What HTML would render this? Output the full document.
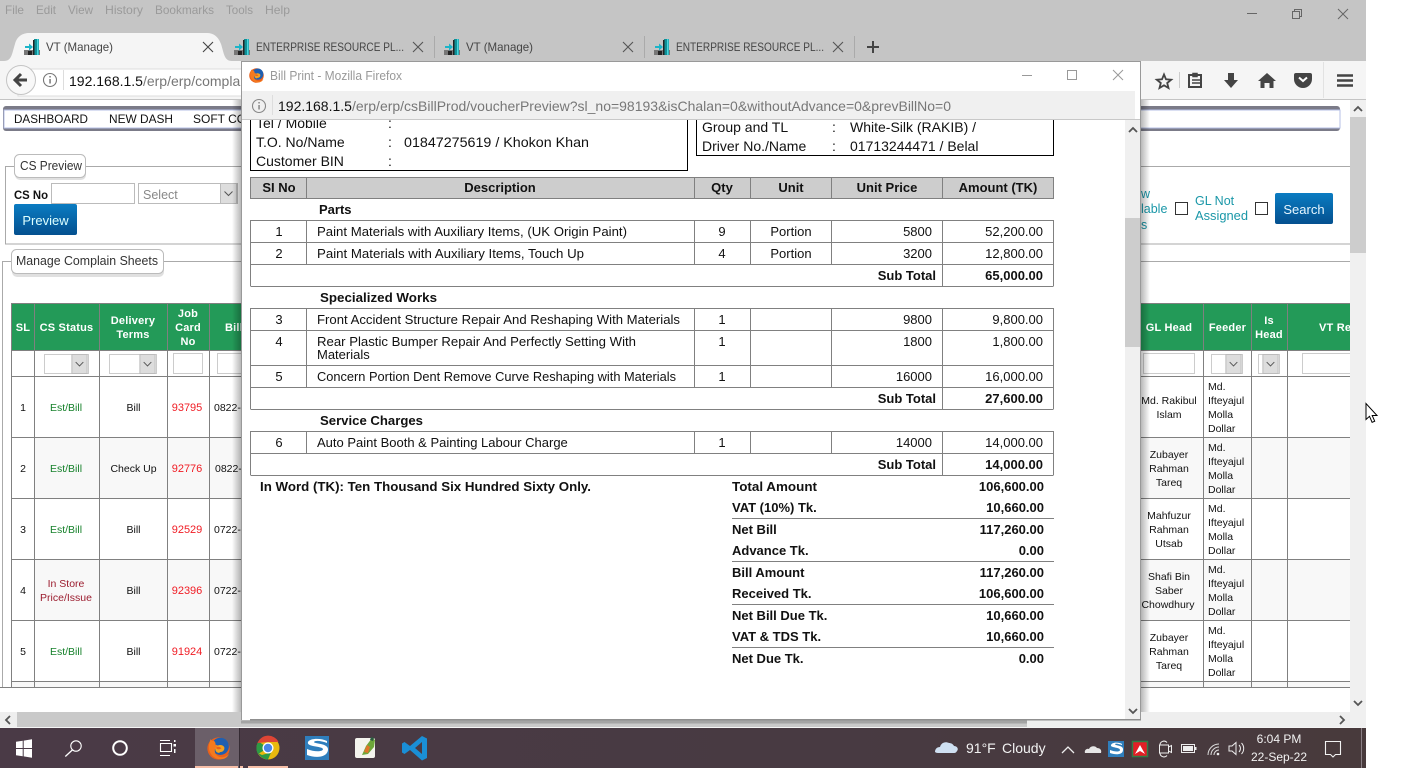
<!DOCTYPE html>
<html><head><meta charset="utf-8"><title>Bill Print</title>
<style>
html,body{margin:0;padding:0;background:#fff;width:1408px;height:768px;overflow:hidden}
svg{display:block;font-family:"Liberation Sans",Arial,sans-serif}
.h{font-weight:bold;fill:#fff;font-size:11px;text-anchor:middle;letter-spacing:.2px}
.c{font-size:10.5px;fill:#111;text-anchor:middle}
.l{font-size:10.5px;fill:#111}
.g{fill:#16812b;font-size:10.5px;text-anchor:middle}
.r{fill:#f01c24;font-size:11px;text-anchor:middle}
.b{font-size:13px;fill:#111}
.bc{font-size:13px;fill:#111;text-anchor:middle}
.br{font-size:13px;fill:#111;text-anchor:end}
.bb{font-size:13px;fill:#111;font-weight:bold}
.bbc{font-size:13px;fill:#111;font-weight:bold;text-anchor:middle}
.bbr{font-size:13px;fill:#111;font-weight:bold;text-anchor:end}
.i{font-size:14px;fill:#111}
.m{font-size:12px;fill:#9a9a9a}
.tab{font-size:12px;fill:#454545}
</style></head>
<body>
<svg width="1408" height="768" viewBox="0 0 1408 768" xmlns="http://www.w3.org/2000/svg">
<defs>
<linearGradient id="btn" x1="0" y1="0" x2="0" y2="1"><stop offset="0" stop-color="#0a7cc2"/><stop offset="1" stop-color="#04508f"/></linearGradient>
<linearGradient id="sh" x1="0" y1="0" x2="1" y2="0"><stop offset="0" stop-color="#000" stop-opacity="0"/><stop offset="1" stop-color="#000" stop-opacity=".28"/></linearGradient>
<linearGradient id="sh2" x1="0" y1="0" x2="1" y2="0"><stop offset="0" stop-color="#000" stop-opacity=".28"/><stop offset="1" stop-color="#000" stop-opacity="0"/></linearGradient>
<linearGradient id="tb" x1="0" y1="0" x2="1" y2="0"><stop offset="0" stop-color="#4a3a46"/><stop offset=".6" stop-color="#483a42"/><stop offset="1" stop-color="#483a3c"/></linearGradient>
<symbol id="fav" viewBox="0 0 16 16"><rect x="0" y="11" width="16" height="5" fill="#777"/><rect x="10" y="0" width="5" height="16" fill="#0f8f96"/><rect x="9" y="1" width="1.500" height="15" fill="#222"/><rect x="13" y="0" width="1.500" height="16" fill="#47d6de"/><path d="M1 7h4V4.500l4 3.500-4 3.500V9H1z" fill="#1cb5c9"/><rect x="4" y="12" width="4" height="4" fill="#222"/></symbol>
<symbol id="ff" viewBox="0 0 32 32"><circle cx="16" cy="16" r="15.500" fill="#e8601c"/><circle cx="18.500" cy="13" r="12" fill="#1f5fb0"/><path d="M5 3C3 8 2 13 3 18c2 8 9 13 16 13 6 0 10-3 12-8-2 3-7 6-12 5-6-1-9-6-8-11 1-2 3-3 5-3 0-2-2-3-4-3 0-3-1-5-3-6-1 1-3 0-4-2z" fill="#f47a1e"/><path d="M14 13c3-3 8-2 10 1 1 4-2 7-6 7-1 2-5 1-6-2-1-2 0-5 2-6z" fill="#f3a21f"/><path d="M13 14c3-1 6 0 7 2-2 1-5 2-7 0z" fill="#e8601c"/></symbol>
<symbol id="sel" viewBox="0 0 17 21"><rect x=".5" y=".5" width="16" height="20" fill="#ddd" stroke="#bbb"/><path d="M4.500 8.500l4 4 4-4" fill="none" stroke="#555" stroke-width="1"/></symbol>
<clipPath id="main"><rect x="0" y="99" width="1350" height="613"/></clipPath>
</defs>

<!-- window chrome -->
<rect x="0" y="0" width="1366" height="61" fill="#c5c5c5"/>
<rect x="0" y="61" width="1366" height="38" fill="#f5f5f5"/>
<rect x="0" y="99" width="1366" height="1" fill="#c4c4c4"/>
<rect x="0" y="100" width="1366" height="628" fill="#fff"/>
<text x="5" y="14" class="m" textLength="19" lengthAdjust="spacingAndGlyphs">File</text><text x="36" y="14" class="m" textLength="20" lengthAdjust="spacingAndGlyphs">Edit</text><text x="68" y="14" class="m" textLength="25" lengthAdjust="spacingAndGlyphs">View</text><text x="105" y="14" class="m" textLength="38" lengthAdjust="spacingAndGlyphs">History</text><text x="155" y="14" class="m" textLength="59" lengthAdjust="spacingAndGlyphs">Bookmarks</text><text x="226" y="14" class="m" textLength="27" lengthAdjust="spacingAndGlyphs">Tools</text><text x="265" y="14" class="m" textLength="25" lengthAdjust="spacingAndGlyphs">Help</text>
<path d="M0 61h4c8 0 8-8 11-17 2-8 8-11 14-11h178c6 0 11 3 14 11 3 9 3 17 11 17z" fill="#f5f5f5"/>
<use href="#fav" x="24" y="39" width="16" height="16"/>
<text x="46" y="51" class="tab" textLength="67" lengthAdjust="spacingAndGlyphs">VT (Manage)</text>
<path d="M203 42l10 10M213 42l-10 10" stroke="#444" stroke-width="1.100"/>
<use href="#fav" x="234" y="39" width="16" height="16"/>
<text x="256" y="51" class="tab" textLength="148" lengthAdjust="spacingAndGlyphs">ENTERPRISE RESOURCE PL...</text>
<path d="M413 42l10 10M423 42l-10 10" stroke="#555" stroke-width="1.100"/>
<rect x="434" y="36" width="1" height="22" fill="#aaa"/>
<use href="#fav" x="444" y="39" width="16" height="16"/>
<text x="466" y="51" class="tab" textLength="67" lengthAdjust="spacingAndGlyphs">VT (Manage)</text>
<path d="M623 42l10 10M633 42l-10 10" stroke="#555" stroke-width="1.100"/>
<rect x="644" y="36" width="1" height="22" fill="#aaa"/>
<use href="#fav" x="654" y="39" width="16" height="16"/>
<text x="676" y="51" class="tab" textLength="148" lengthAdjust="spacingAndGlyphs">ENTERPRISE RESOURCE PL...</text>
<path d="M833 42l10 10M843 42l-10 10" stroke="#555" stroke-width="1.100"/>
<rect x="854" y="36" width="1" height="22" fill="#aaa"/>
<path d="M873 41v12M867 47h12" stroke="#444" stroke-width="2"/>
<path d="M1247 13.500h10" stroke="#666" stroke-width="1"/>
<path d="M1292.500 11.500h7v7h-7zM1294.500 11.500v-2h7v7h-2" fill="none" stroke="#666"/>
<path d="M1338 9l10 10M1348 9l-10 10" stroke="#666" stroke-width="1"/>

<!-- nav bar -->
<rect x="18" y="69" width="1122" height="27" fill="#fff" stroke="#ddd"/>
<circle cx="21" cy="80" r="14.500" fill="#f8f8f8" stroke="#c4c4c4"/>
<path d="M27 80H16M21 74l-6 6 6 6" fill="none" stroke="#444" stroke-width="3"/>
<circle cx="50" cy="80" r="6.500" fill="none" stroke="#777" stroke-width="1.100"/><rect x="49.300" y="79" width="1.500" height="4.500" fill="#777"/><rect x="49.300" y="76" width="1.500" height="1.500" fill="#777"/>
<rect x="63" y="70" width="1" height="20" fill="#ddd"/>
<text x="69" y="86" style="font-size:14px" fill="#111">192.168.1.5<tspan fill="#777">/erp/erp/complain</tspan></text>
<path d="M1164 74.500l2 4.800 5.200.4-4 3.300 1.300 5-4.500-2.700-4.500 2.700 1.300-5-4-3.300 5.200-.4z" fill="none" stroke="#444" stroke-width="1.800"/>
<rect x="1179" y="72" width="1" height="16" fill="#ccc"/>
<path d="M1189 75h12v12h-12z" fill="none" stroke="#444" stroke-width="2"/><path d="M1193 73.500h4v3h-4zM1192 80h8M1192 83h8" fill="none" stroke="#444" stroke-width="1.500"/>
<path d="M1228 73h6v7h4l-7 8-7-8h4z" fill="#444"/>
<path d="M1267 73l9 8h-2.500v7h-4v-5h-5v5h-4v-7H1258z" fill="#444"/>
<path d="M1296 73h14a2 2 0 0 1 2 2v4a9 9 0 0 1-18 0v-4a2 2 0 0 1 2-2z" fill="#444"/><path d="M1299 77.500l4 3.500 4-3.500" fill="none" stroke="#fff" stroke-width="2"/>
<path d="M1337 75.500h16M1337 80.500h16M1337 85.500h16" stroke="#444" stroke-width="2.600"/>
<rect x="1323" y="62" width="1" height="36" fill="#e2e2e2"/>

<!-- page -->
<g clip-path="url(#main)">
<rect x="3" y="106" width="1337" height="25" rx="3" fill="#7b7b88"/>
<rect x="4" y="110" width="1336" height="18" fill="#fff" stroke="#b4bfe6"/>
<text x="14" y="123" style="font-size:12px" fill="#111" textLength="74" lengthAdjust="spacingAndGlyphs">DASHBOARD</text><text x="109" y="123" style="font-size:12px" fill="#111" textLength="64" lengthAdjust="spacingAndGlyphs">NEW DASH</text><text x="193" y="123" style="font-size:12px" fill="#111">SOFT CO</text>

<path d="M14 166.500H5.500v77.500H1350M86 166.500H1350" fill="none" stroke="#aaa"/>
<path d="M11 261.500H2.500V687M163 261.500H1350" fill="none" stroke="#aaa"/>
<rect x="15" y="156" width="71" height="24" rx="5" fill="#000" opacity=".12"/>
<rect x="14.500" y="154.500" width="71" height="23" rx="5" fill="#fff" stroke="#bbb"/>
<text x="20" y="170" style="font-size:12.500px" fill="#333" textLength="62" lengthAdjust="spacingAndGlyphs">CS Preview</text>
<text x="14" y="199" style="font-size:12px;font-weight:bold" fill="#111" textLength="34" lengthAdjust="spacingAndGlyphs">CS No</text>
<rect x="51.500" y="183.500" width="83" height="20" fill="#fff" stroke="#bbb"/>
<rect x="138.500" y="183.500" width="99" height="20" fill="#fff" stroke="#bbb"/>
<text x="143" y="199" style="font-size:12.500px" fill="#888">Select</text>
<use href="#sel" x="220" y="183" width="17" height="21"/>
<rect x="14" y="204" width="63" height="31" rx="2" fill="url(#btn)"/>
<text x="45.500" y="225" style="font-size:13px;text-anchor:middle" fill="#dff">Preview</text>
<rect x="12" y="251" width="152" height="26" rx="5" fill="#000" opacity=".12"/>
<rect x="11.500" y="249.500" width="152" height="24" rx="5" fill="#fff" stroke="#bbb"/>
<text x="16" y="265" style="font-size:12.500px" fill="#333" textLength="142" lengthAdjust="spacingAndGlyphs">Manage Complain Sheets</text>

<!-- right filter -->
<g style="font-size:12.500px" fill="#1a97a8"><text x="1141" y="198">w</text><text x="1141" y="213">lable</text><text x="1141" y="229">s</text><text x="1195" y="205">GL Not</text><text x="1195" y="220" textLength="53" lengthAdjust="spacingAndGlyphs">Assigned</text></g>
<rect x="1175.500" y="202.500" width="12" height="12" fill="#fff" stroke="#333"/>
<rect x="1255.500" y="202.500" width="12" height="12" fill="#fff" stroke="#333"/>
<rect x="1275" y="193" width="58" height="31" rx="2" fill="url(#btn)"/>
<text x="1304" y="214" style="font-size:13px;text-anchor:middle" fill="#e6f6ff">Search</text>

<!-- complain table -->
<rect x="11" y="303" width="1339" height="47" fill="#239a58"/>
<rect x="35" y="438" width="1315" height="60" fill="#f8f8f8"/>
<rect x="35" y="560" width="1315" height="60" fill="#f8f8f8"/>
<rect x="11" y="682" width="1339" height="5" fill="#f8f8f8"/>
<path d="M11.500 303V687M34.500 303V687M99.500 303V687M167.500 303V687M209.500 303V687M1140.500 303V687M1203.500 303V687M1251.500 303V687M1287.500 303V687" stroke="#808080" fill="none"/>
<path d="M11 303.500H1350M11 350.500H1350M11 376.500H1350M11 437.500H1350M11 498.500H1350M11 559.500H1350M11 620.500H1350M11 681.500H1350M0 687.500H1350" stroke="#808080" fill="none"/>
<text x="23" y="331" class="h">SL</text><text x="66.500" y="331" class="h">CS Status</text>
<text x="133" y="324" class="h">Delivery</text><text x="133" y="338" class="h">Terms</text>
<text x="188" y="317" class="h">Job</text><text x="188" y="331" class="h">Card</text><text x="188" y="345" class="h">No</text>
<text x="225" y="331" class="h" style="text-anchor:start">Bill</text>
<text x="1169" y="331" class="h">GL Head</text><text x="1227.500" y="331" class="h">Feeder</text>
<text x="1269" y="324" class="h">Is</text><text x="1269" y="338" class="h">Head</text>
<text x="1319" y="331" class="h" style="text-anchor:start">VT Re</text>
<!-- filters -->
<g fill="#fff" stroke="#ccc"><rect x="44.500" y="354.500" width="44" height="19"/><rect x="109.500" y="354.500" width="47" height="19"/><rect x="173.500" y="353.500" width="29" height="20"/><rect x="217.500" y="353.500" width="40" height="20"/><rect x="1143.500" y="353.500" width="51" height="20"/><rect x="1211.500" y="354.500" width="31" height="19"/><rect x="1258.500" y="354.500" width="21" height="19"/><rect x="1302.500" y="353.500" width="60" height="20"/></g>
<use href="#sel" x="71" y="354" width="17" height="20"/><use href="#sel" x="139" y="354" width="17" height="20"/><use href="#sel" x="1225" y="354" width="17" height="20"/><use href="#sel" x="1262" y="354" width="17" height="20"/>
<!-- rows -->
<text x="23" y="411" class="c">1</text><text x="66" y="411" class="g">Est/Bill</text><text x="133.500" y="411" class="c">Bill</text><text x="187" y="411" class="r">93795</text><text x="214" y="411" class="l">0822-</text>
<text x="23" y="472" class="c">2</text><text x="66" y="472" class="g">Est/Bill</text><text x="133.500" y="472" class="c">Check Up</text><text x="187" y="472" class="r">92776</text><text x="215" y="472" class="l">0822-</text>
<text x="23" y="533" class="c">3</text><text x="66" y="533" class="g">Est/Bill</text><text x="133.500" y="533" class="c">Bill</text><text x="187" y="533" class="r">92529</text><text x="214" y="533" class="l">0722-</text>
<text x="23" y="594" class="c">4</text><text x="66" y="587" class="c" style="fill:#9b1c2e">In Store</text><text x="66" y="601" class="c" style="fill:#9b1c2e">Price/Issue</text><text x="133.500" y="594" class="c">Bill</text><text x="187" y="594" class="r">92396</text><text x="214" y="594" class="l">0722-</text>
<text x="23" y="655" class="c">5</text><text x="66" y="655" class="g">Est/Bill</text><text x="133.500" y="655" class="c">Bill</text><text x="187" y="655" class="r">91924</text><text x="214" y="655" class="l">0722-</text>
<text x="1169" y="404" class="c">Md. Rakibul</text><text x="1169" y="418" class="c">Islam</text>
<text x="1169" y="458" class="c">Zubayer</text><text x="1169" y="472" class="c">Rahman</text><text x="1169" y="486" class="c">Tareq</text>
<text x="1169" y="519" class="c">Mahfuzur</text><text x="1169" y="533" class="c">Rahman</text><text x="1169" y="547" class="c">Utsab</text>
<text x="1169" y="580" class="c">Shafi Bin</text><text x="1169" y="594" class="c">Saber</text><text x="1168" y="608" class="c">Chowdhury</text>
<text x="1169" y="641" class="c">Zubayer</text><text x="1169" y="655" class="c">Rahman</text><text x="1169" y="669" class="c">Tareq</text>
<text x="1208" y="390" class="l">Md.</text><text x="1208" y="404" class="l">Ifteyajul</text><text x="1208" y="418" class="l">Molla</text><text x="1208" y="432" class="l">Dollar</text>
<text x="1208" y="451" class="l">Md.</text><text x="1208" y="465" class="l">Ifteyajul</text><text x="1208" y="479" class="l">Molla</text><text x="1208" y="493" class="l">Dollar</text>
<text x="1208" y="512" class="l">Md.</text><text x="1208" y="526" class="l">Ifteyajul</text><text x="1208" y="540" class="l">Molla</text><text x="1208" y="554" class="l">Dollar</text>
<text x="1208" y="573" class="l">Md.</text><text x="1208" y="587" class="l">Ifteyajul</text><text x="1208" y="601" class="l">Molla</text><text x="1208" y="615" class="l">Dollar</text>
<text x="1208" y="634" class="l">Md.</text><text x="1208" y="648" class="l">Ifteyajul</text><text x="1208" y="662" class="l">Molla</text><text x="1208" y="676" class="l">Dollar</text>
</g>

<!-- main scrollbars -->
<rect x="1350" y="100" width="16" height="628" fill="#f0f0f0"/>
<rect x="1350" y="117" width="16" height="136" fill="#cdcdcd"/>
<path d="M1354 111l4-4 4 4" fill="none" stroke="#555" stroke-width="1.800"/>
<path d="M1354 701l4 4 4-4" fill="none" stroke="#555" stroke-width="1.800"/>
<rect x="0" y="712" width="1350" height="16" fill="#eee"/>
<rect x="17" y="712" width="1010" height="16" fill="#c9c9c9"/>
<path d="M10 716l-4 4 4 4" fill="none" stroke="#555" stroke-width="1.800"/>
<path d="M1340 716l4 4-4 4" fill="none" stroke="#555" stroke-width="1.800"/>
<rect x="0" y="727" width="1366" height="1" fill="#f4f4f4"/>

<!-- popup shadow -->
<rect x="232" y="100" width="9" height="612" fill="url(#sh)"/>
<rect x="1141" y="100" width="9" height="612" fill="url(#sh2)"/>
<!-- popup -->
<rect x="241" y="61" width="900" height="659" fill="#fff"/>
<!-- bill content -->
<path d="M250.500 115V170.500H687.500V115" fill="none" stroke="#000" stroke-width="1"/>
<path d="M696.500 115V155.500H1053.500V115" fill="none" stroke="#000" stroke-width="1"/>
<text x="256" y="128" class="i">Tel / Mobile</text><text x="388" y="128" class="i">:</text>
<text x="256" y="147" class="i">T.O. No/Name</text><text x="388" y="147" class="i">:</text><text x="404" y="147" class="i" textLength="185" lengthAdjust="spacingAndGlyphs">01847275619 / Khokon Khan</text>
<text x="256" y="166" class="i">Customer BIN</text><text x="388" y="166" class="i">:</text>
<text x="702" y="132" class="i">Group and TL</text><text x="832" y="132" class="i">:</text><text x="850" y="132" class="i">White-Silk (RAKIB) /</text>
<text x="702" y="151" class="i">Driver No./Name</text><text x="832" y="151" class="i">:</text><text x="850" y="151" class="i">01713244471 / Belal</text>

<rect x="250" y="177" width="804" height="21" fill="#cdcdcd"/>
<g fill="none" stroke="#808080">
<path d="M250.500 177.500H1053.500V198.500H250.500Z"/>
<path d="M306.500 177V198M694.500 177V198M750.500 177V198M831.500 177V198M942.500 177V198"/>
<path d="M250.500 220.500H1053.500M250.500 242.500H1053.500M250.500 264.500H1053.500M250.500 286.500H1053.500M250.500 220V286M1053.500 220V286M306.500 220V264M694.500 220V264M750.500 220V264M831.500 220V264M942.500 220V286"/>
<path d="M250.500 308.500H1053.500M250.500 330.500H1053.500M250.500 365.500H1053.500M250.500 387.500H1053.500M250.500 409.500H1053.500M250.500 308V409M1053.500 308V409M306.500 308V387M694.500 308V387M750.500 308V387M831.500 308V387M942.500 308V409"/>
<path d="M250.500 431.500H1053.500M250.500 453.500H1053.500M250.500 475.500H1053.500M250.500 431V475M1053.500 431V475M306.500 431V453M694.500 431V453M750.500 431V453M831.500 431V453M942.500 431V475"/>
<path d="M732 518.500H1054M732 561.500H1054M732 604.500H1054M732 647.500H1054"/>
</g>
<text x="279" y="192" class="bbc">SI No</text><text x="500" y="192" class="bbc">Description</text><text x="722" y="192" class="bbc">Qty</text><text x="791" y="192" class="bbc">Unit</text><text x="887" y="192" class="bbc">Unit Price</text><text x="998" y="192" class="bbc">Amount (TK)</text>
<text x="319" y="214" class="bb">Parts</text>
<text x="279" y="236" class="bc">1</text><text x="317" y="236" class="b" textLength="310" lengthAdjust="spacingAndGlyphs">Paint Materials with Auxiliary Items, (UK Origin Paint)</text><text x="722" y="236" class="bc">9</text><text x="791" y="236" class="bc">Portion</text><text x="932" y="236" class="br">5800</text><text x="1043" y="236" class="br">52,200.00</text>
<text x="279" y="258" class="bc">2</text><text x="317" y="258" class="b" textLength="267" lengthAdjust="spacingAndGlyphs">Paint Materials with Auxiliary Items, Touch Up</text><text x="722" y="258" class="bc">4</text><text x="791" y="258" class="bc">Portion</text><text x="932" y="258" class="br">3200</text><text x="1043" y="258" class="br">12,800.00</text>
<text x="936" y="280" class="bbr">Sub Total</text><text x="1043" y="280" class="bbr">65,000.00</text>
<text x="320" y="302" class="bb" textLength="117" lengthAdjust="spacingAndGlyphs">Specialized Works</text>
<text x="279" y="324" class="bc">3</text><text x="317" y="324" class="b" textLength="363" lengthAdjust="spacingAndGlyphs">Front Accident Structure Repair And Reshaping With Materials</text><text x="722" y="324" class="bc">1</text><text x="932" y="324" class="br">9800</text><text x="1043" y="324" class="br">9,800.00</text>
<text x="279" y="346" class="bc">4</text><text x="317" y="346" class="b" textLength="319" lengthAdjust="spacingAndGlyphs">Rear Plastic Bumper Repair And Perfectly Setting With</text><text x="317" y="359" class="b">Materials</text><text x="722" y="346" class="bc">1</text><text x="932" y="346" class="br">1800</text><text x="1043" y="346" class="br">1,800.00</text>
<text x="279" y="381" class="bc">5</text><text x="317" y="381" class="b" textLength="359" lengthAdjust="spacingAndGlyphs">Concern Portion Dent Remove Curve Reshaping with Materials</text><text x="722" y="381" class="bc">1</text><text x="932" y="381" class="br">16000</text><text x="1043" y="381" class="br">16,000.00</text>
<text x="936" y="403" class="bbr">Sub Total</text><text x="1043" y="403" class="bbr">27,600.00</text>
<text x="320" y="425" class="bb" textLength="103" lengthAdjust="spacingAndGlyphs">Service Charges</text>
<text x="279" y="447" class="bc">6</text><text x="317" y="447" class="b">Auto Paint Booth &amp; Painting Labour Charge</text><text x="722" y="447" class="bc">1</text><text x="932" y="447" class="br">14000</text><text x="1043" y="447" class="br">14,000.00</text>
<text x="936" y="469" class="bbr">Sub Total</text><text x="1043" y="469" class="bbr">14,000.00</text>
<text x="260" y="491" class="bb" textLength="331" lengthAdjust="spacingAndGlyphs">In Word (TK): Ten Thousand Six Hundred Sixty Only.</text>
<text x="732" y="491" class="bb" textLength="85" lengthAdjust="spacingAndGlyphs">Total Amount</text><text x="1044" y="491" class="bbr">106,600.00</text>
<text x="732" y="512" class="bb">VAT (10%) Tk.</text><text x="1044" y="512" class="bbr">10,660.00</text>
<text x="732" y="534" class="bb">Net Bill</text><text x="1044" y="534" class="bbr">117,260.00</text>
<text x="732" y="555" class="bb">Advance Tk.</text><text x="1044" y="555" class="bbr">0.00</text>
<text x="732" y="577" class="bb">Bill Amount</text><text x="1044" y="577" class="bbr">117,260.00</text>
<text x="732" y="598" class="bb">Received Tk.</text><text x="1044" y="598" class="bbr">106,600.00</text>
<text x="732" y="620" class="bb">Net Bill Due Tk.</text><text x="1044" y="620" class="bbr">10,660.00</text>
<text x="732" y="641" class="bb">VAT &amp; TDS Tk.</text><text x="1044" y="641" class="bbr">10,660.00</text>
<text x="732" y="663" class="bb">Net Due Tk.</text><text x="1044" y="663" class="bbr">0.00</text>

<!-- popup chrome -->
<rect x="241" y="61" width="900" height="59" fill="#fff"/>
<rect x="241" y="91" width="894" height="28" fill="#f0f0f0"/>
<rect x="241" y="119" width="900" height="1" fill="#c8c8c8"/>
<use href="#ff" x="249" y="68" width="15" height="15"/>
<text x="270" y="80" style="font-size:12.500px" fill="#999" textLength="132" lengthAdjust="spacingAndGlyphs">Bill Print - Mozilla Firefox</text>
<path d="M1022 75.500h10" stroke="#999"/>
<rect x="1067.500" y="70.500" width="9" height="9" fill="none" stroke="#999"/>
<path d="M1113 70l10 10M1123 70l-10 10" stroke="#999"/>
<circle cx="259" cy="106" r="6.500" fill="none" stroke="#888" stroke-width="1.100"/><rect x="258.300" y="105" width="1.500" height="4.500" fill="#888"/><rect x="258.300" y="102" width="1.500" height="1.500" fill="#888"/>
<rect x="272" y="95" width="1" height="20" fill="#ddd"/>
<text x="278" y="111" style="font-size:14px" fill="#111" textLength="673" lengthAdjust="spacingAndGlyphs">192.168.1.5<tspan fill="#777">/erp/erp/csBillProd/voucherPreview?sl_no=98193&amp;isChalan=0&amp;withoutAdvance=0&amp;prevBillNo=0</tspan></text>
<!-- popup scrollbar -->
<rect x="1125" y="120" width="15" height="599" fill="#f0f0f0"/>
<rect x="1125" y="218" width="15" height="129" fill="#cdcdcd"/>
<path d="M1129 132l4-4 4 4" fill="none" stroke="#555" stroke-width="1.800"/>
<path d="M1129 709l4 4 4-4" fill="none" stroke="#555" stroke-width="1.800"/>
<!-- popup border -->
<path d="M241.500 720V61.500H1140.500V720" fill="none" stroke="#999"/>
<rect x="250" y="719" width="891" height="1.500" fill="#8f8f8f"/>
<rect x="241" y="720.500" width="786" height="3" fill="#000" opacity=".18"/>

<!-- cursor -->
<path d="M1366 403.500v16l3.500-3.200 2.600 6 2.600-1.100-2.500-5.700h4.800z" fill="#fff" stroke="#000" stroke-width="1"/>

<!-- taskbar -->
<rect x="0" y="728" width="1366" height="40" fill="url(#tb)"/>
<rect x="1366" y="728" width="42" height="40" fill="#fff"/>
<path d="M16 741.800l6.700-1v7.200H16zM23.700 740.600l8.300-1.300V748h-8.300zM16 749h6.700v7.200l-6.700-1zM23.700 749H32v8.700l-8.300-1.300z" fill="#fff"/>
<circle cx="76" cy="746" r="5.200" fill="none" stroke="#fff" stroke-width="1.100"/><path d="M72.300 750l-7 6.500" stroke="#fff" stroke-width="1.300"/>
<circle cx="120" cy="748" r="6.800" fill="none" stroke="#fff" stroke-width="2"/>
<path d="M160 740.500h10M160 755.500h10M160.500 743.500h11v8h-11z" fill="none" stroke="#fff" stroke-width="1.100"/><rect x="173.500" y="744" width="2.500" height="2.500" fill="#fff"/><rect x="174" y="749" width="1.500" height="4" fill="#fff"/><rect x="174" y="740" width="1.500" height="2" fill="#fff"/>
<rect x="195" y="728" width="44" height="40" fill="#6b5f69"/>
<rect x="239" y="728" width="1" height="40" fill="#352b33"/>
<rect x="195" y="766" width="43" height="2" fill="#f7bfa8"/><rect x="240" y="766" width="3" height="2" fill="#f7bfa8"/><rect x="248" y="766" width="40" height="2" fill="#f7bfa8"/>
<use href="#ff" x="207" y="737" width="23" height="23"/>
<circle cx="268" cy="748" r="11.500" fill="#eab90f"/>
<path d="M268 748L258 754a11.500 11.500 0 0 1 .5-12.500L268 748z" fill="#2d9a45"/>
<path d="M257.500 743a11.500 11.500 0 0 1 21-1H268z" fill="#de4535"/>
<path d="M262 755l-4-2a11.500 11.500 0 0 0 10 6.500l3-7z" fill="#2d9a45"/>
<circle cx="268" cy="748" r="5.500" fill="#fff"/><circle cx="268" cy="748" r="4.200" fill="#4a86e8"/>
<rect x="305" y="736" width="24" height="24" fill="#2f7ebc"/>
<path d="M327 741c-6-3-17-3-19 1-2 5 14 4 15 7 0 3-9 3-16 0v6c8 3 20 3 21-5 1-7-14-6-14-8 1-2 8-1 13 1z" fill="#fff"/>
<rect x="355" y="738" width="20" height="20" rx="2" fill="#f4f4ee"/>
<path d="M362 755l4-9 6-8 3 2-1 7-6 7z" fill="#6da63a"/><path d="M364 752l3-7 3 2-2 6z" fill="#e0762a"/><path d="M371 737l3 1-1 3-3-1z" fill="#2b5c3e"/>
<path d="M422 736l5 2.500v19.500l-5 2.500-12-10.500-5.500 4-2.500-1.500v-9l2.500-1.500 5.500 4zM422 742l-7 6 7 6z" fill="#1a8fd6" fill-rule="evenodd"/>
<rect x="1361" y="728" width="1" height="40" fill="#8a7f85"/>

<path d="M935 752c0-3 2-5 5-5 1-4 5-6 9-4 2 0 4 1 5 3 3 0 5 3 3 5-1 2-2 2-4 2h-15c-2 0-3-1-3-1z" fill="#cfe0f2"/>
<text x="966" y="753" style="font-size:14px" fill="#f2f2f2">91°F</text><text x="1002" y="753" style="font-size:14px" fill="#f2f2f2">Cloudy</text>
<path d="M1062 753l6-6 6 6" fill="none" stroke="#eee" stroke-width="1.300"/>
<path d="M1085 753c-1-3 2-5 4-4 1-3 6-4 8-1 3 0 5 2 4 5z" fill="#e6e6e6"/>
<rect x="1108" y="741" width="16" height="16" fill="#2f7ebc"/><path d="M1122 744c-3-2-10-2-11 1-1 3 9 2 9 5 0 2-5 2-10 0v3c5 2 13 2 13-3 1-5-8-4-8-6 1-1 4 0 7 1z" fill="#fff"/>
<rect x="1132.500" y="741.500" width="15" height="15" fill="#e21f26" stroke="#2f7d46" stroke-width="1.500"/><path d="M1135 754l5-9 5 9-5-3z" fill="#fff"/>
<path d="M1160 745.500a4 4 0 0 1 7-3M1160 752.500a4 4 0 0 0 7 3M1159.500 745h9v8h-9zM1168.500 747l3-1.500v7l-3-1.500" fill="none" stroke="#eee" stroke-width="1"/>
<rect x="1181.500" y="744.500" width="13" height="8" fill="none" stroke="#eee"/><rect x="1183" y="746" width="10" height="5" fill="#eee"/><rect x="1195" y="747" width="1.500" height="3" fill="#eee"/>
<path d="M1208 755a11 11 0 0 1 11-11M1211 755a8 8 0 0 1 8-8M1214 755a5 5 0 0 1 5-5" fill="none" stroke="#ddd" stroke-width="1"/><circle cx="1218" cy="754" r="1.300" fill="#eee"/>
<path d="M1229 746h3l4-3.500v12l-4-3.500h-3zM1239 745a5 5 0 0 1 0 7M1241.500 743a8 8 0 0 1 0 11" fill="none" stroke="#eee" stroke-width="1"/>
<text x="1279" y="743" style="font-size:12px;text-anchor:middle" fill="#f2f2f2">6:04 PM</text>
<text x="1279" y="761" style="font-size:12px;text-anchor:middle" fill="#f2f2f2">22-Sep-22</text>
<path d="M1325.500 741.500h15v13h-5l-2.500 2.500-2.500-2.500h-5z" fill="none" stroke="#f2f2f2" stroke-width="1.100"/>
</svg>
</body></html>
